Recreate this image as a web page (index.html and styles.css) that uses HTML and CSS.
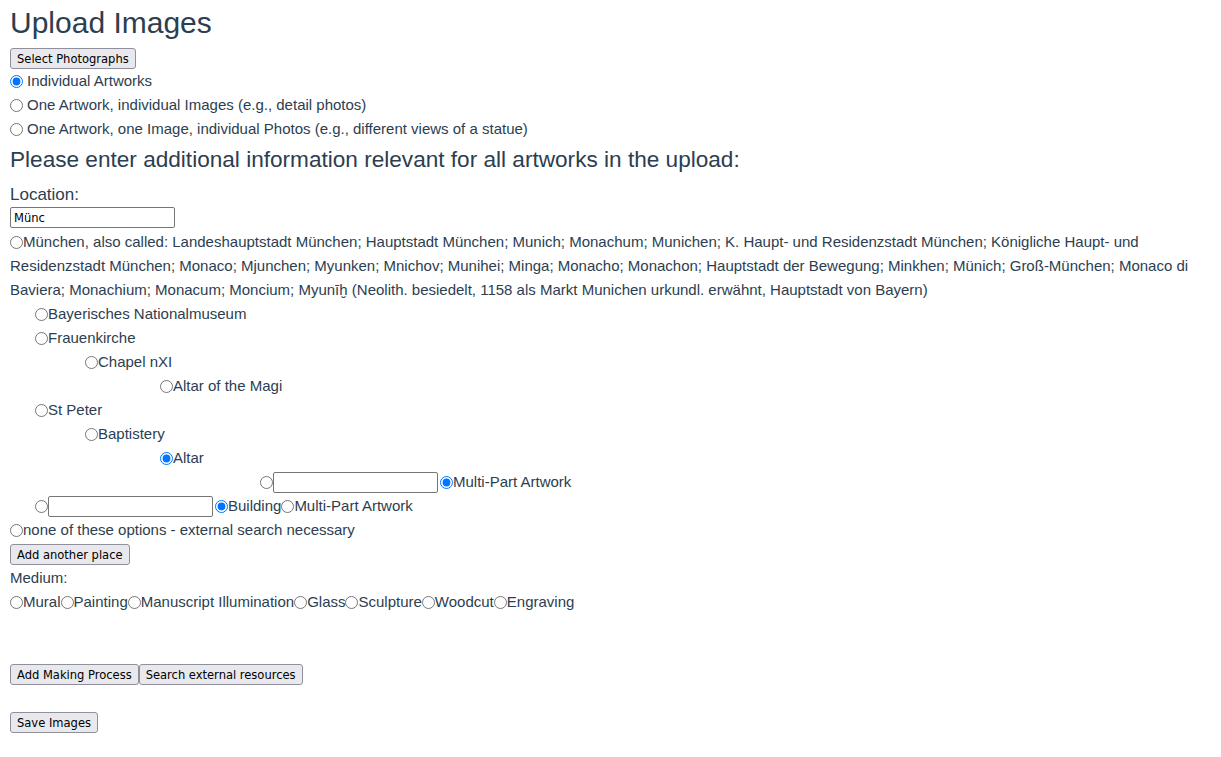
FILE: index.html
```html
<!DOCTYPE html>
<html lang="en">
<head>
<meta charset="utf-8">
<title>Upload Images</title>
<link rel="stylesheet" href="styles.css">
</head>
<body>
<div class="page">
  <h1 class="title">Upload Images</h1>
  <div class="btn-row first"><button class="btn">Select Photographs</button></div>
  <label class="row"><input type="radio" name="mode" class="radio spaced" checked>Individual Artworks</label>
  <label class="row"><input type="radio" name="mode" class="radio spaced">One Artwork, individual Images (e.g., detail photos)</label>
  <label class="row"><input type="radio" name="mode" class="radio spaced">One Artwork, one Image, individual Photos (e.g., different views of a statue)</label>

  <h3 class="section-title">Please enter additional information relevant for all artworks in the upload:</h3>
  <div class="field-label large">Location:</div>
  <div class="input-row"><input type="text" class="text-input" value="Münc"></div>

  <div class="place-text"><input type="radio" name="place" class="radio inline">München, also called: Landeshauptstadt München; Hauptstadt München; Munich; Monachum; Munichen; K. Haupt- und Residenzstadt München; Königliche Haupt- und Residenzstadt München; Monaco; Mjunchen; Myunken; Mnichov; Munihei; Minga; Monacho; Monachon; Hauptstadt der Bewegung; Minkhen; Münich; Groß-München; Monaco di Baviera; Monachium; Monacum; Moncium; Myunīḫ (Neolith. besiedelt, 1158 als Markt Munichen urkundl. erwähnt, Hauptstadt von Bayern)</div>
  <label class="row depth-1"><input type="radio" name="place" class="radio">Bayerisches Nationalmuseum</label>
  <label class="row depth-1"><input type="radio" name="place" class="radio">Frauenkirche</label>
  <label class="row depth-2"><input type="radio" name="place" class="radio">Chapel nXI</label>
  <label class="row depth-3"><input type="radio" name="place" class="radio">Altar of the Magi</label>
  <label class="row depth-1"><input type="radio" name="place" class="radio">St Peter</label>
  <label class="row depth-2"><input type="radio" name="place" class="radio">Baptistery</label>
  <label class="row depth-3"><input type="radio" name="place" class="radio" checked>Altar</label>
  <div class="row depth-4"><input type="radio" name="newsub" class="radio"><input type="text" class="text-input"><input type="radio" name="newsubkind" class="radio gap-left" checked>Multi-Part Artwork</div>
  <div class="row depth-1"><input type="radio" name="newplace" class="radio"><input type="text" class="text-input"><input type="radio" name="newkind" class="radio gap-left" checked>Building<input type="radio" name="newkind" class="radio">Multi-Part Artwork</div>
  <label class="row"><input type="radio" name="place" class="radio">none of these options - external search necessary</label>
  <div class="btn-row"><button class="btn">Add another place</button></div>

  <div class="field-label">Medium:</div>
  <div class="row"><input type="radio" name="medium" class="radio">Mural<input type="radio" name="medium" class="radio">Painting<input type="radio" name="medium" class="radio">Manuscript Illumination<input type="radio" name="medium" class="radio">Glass<input type="radio" name="medium" class="radio">Sculpture<input type="radio" name="medium" class="radio">Woodcut<input type="radio" name="medium" class="radio">Engraving</div>

  <div class="btn-row actions"><button class="btn">Add Making Process</button><button class="btn">Search external resources</button></div>
  <div class="btn-row save"><button class="btn">Save Images</button></div>
</div>
</body>
</html>
```

FILE: styles.css
```css
html, body {
  margin: 0;
  padding: 0;
  background: #ffffff;
}

body {
  font-family: "Liberation Sans", Arial, sans-serif;
  font-size: 15px;
  line-height: 24px;
  color: #2c3e50;
}

.page {
  padding: 0 10px;
}

.title {
  margin: 3px 0 2px;
  font-size: 30px;
  line-height: 40px;
  font-weight: 400;
}

.section-title {
  margin: 4px 0 8px;
  font-size: 22.6px;
  line-height: 30px;
  font-weight: 400;
}

.field-label {
  height: 24px;
}

.field-label.large {
  font-size: 17px;
}

.btn-row {
  display: flex;
  padding: 2px 0 1px;
}

.btn-row.first {
  padding: 3px 0 0;
}

.btn-row.actions {
  margin-top: 48px;
}

.btn-row.save {
  margin-top: 24px;
}

.btn {
  margin: 0;
  height: 21px;
  box-sizing: border-box;
  padding: 0 6px;
  border: 1px solid #8f8f9d;
  border-radius: 3px;
  background: #e9e9ed;
  color: #000000;
  font-family: "DejaVu Sans Condensed", "DejaVu Sans", sans-serif;
  font-stretch: condensed;
  font-size: 12.8px;
  line-height: 19px;
}

.input-row {
  display: flex;
  padding-bottom: 2px;
}

.text-input {
  margin: 0;
  width: 165px;
  height: 21px;
  box-sizing: border-box;
  padding: 1px 3px;
  border: 1px solid #767676;
  border-radius: 2px;
  background: #ffffff;
  color: #000000;
  font-family: "DejaVu Sans Condensed", "DejaVu Sans", sans-serif;
  font-stretch: condensed;
  font-size: 12.8px;
}

.row {
  display: flex;
  align-items: center;
  height: 24px;
  white-space: nowrap;
}

.radio {
  margin: 0;
  width: 13px;
  height: 13px;
  flex: none;
}

.radio.spaced {
  margin-right: 4px;
}

.radio.inline {
  vertical-align: -2px;
}

.radio.gap-left {
  margin-left: 2px;
}

.place-text {
  line-height: 24px;
}

.depth-1 { padding-left: 25px; }
.depth-2 { padding-left: 75px; }
.depth-3 { padding-left: 150px; }
.depth-4 { padding-left: 250px; }
```
